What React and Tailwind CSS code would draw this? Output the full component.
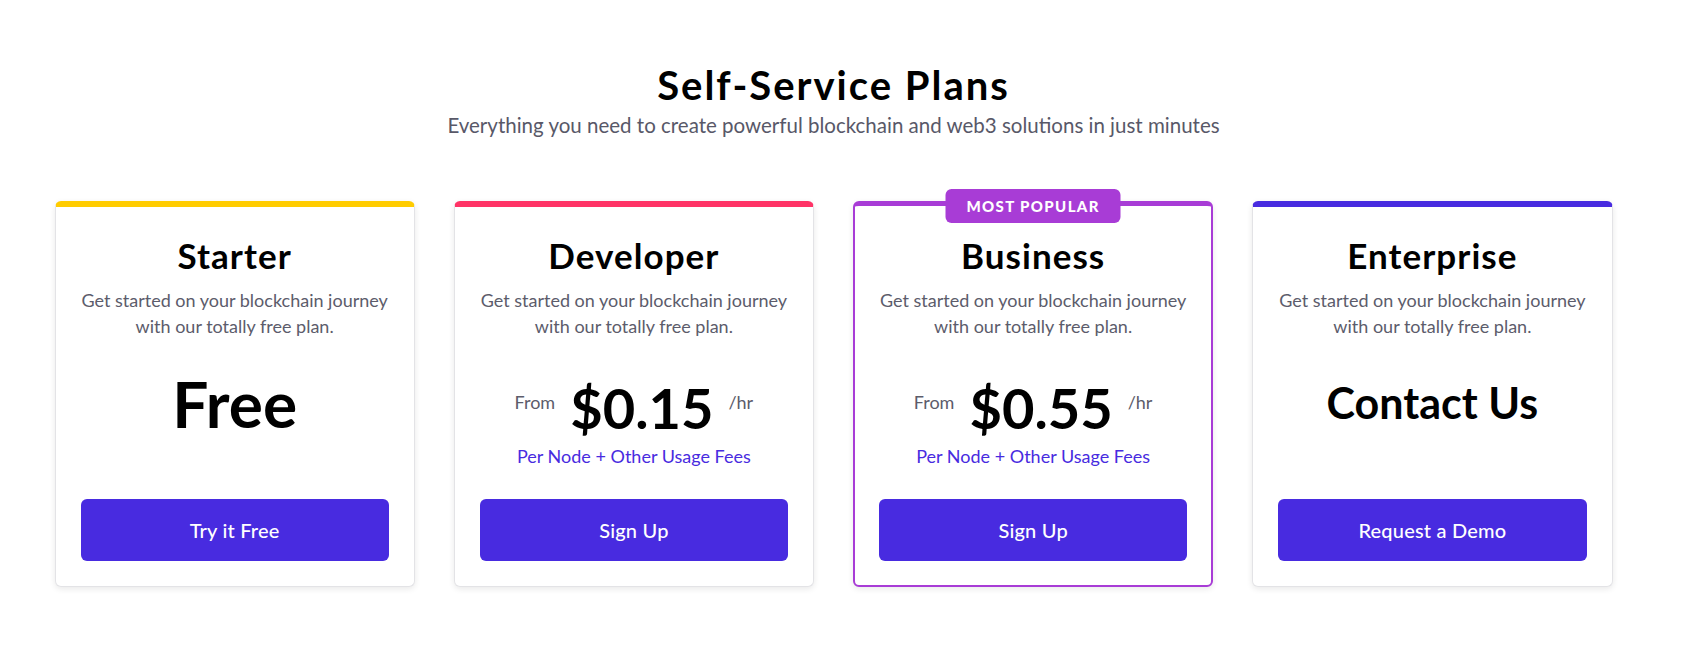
const plans = [
  {
    name: "Starter",
    bar: "border-t-[#ffcc00]",
    price: "Free",
    cta: "Try it Free",
  },
  {
    name: "Developer",
    bar: "border-t-[#ff3366]",
    price: "$0.15",
    from: true,
    cta: "Sign Up",
  },
  {
    name: "Business",
    popular: true,
    price: "$0.55",
    from: true,
    cta: "Sign Up",
  },
  {
    name: "Enterprise",
    bar: "border-t-[#482be0]",
    price: "Contact Us",
    contact: true,
    cta: "Request a Demo",
  },
];

const PlanCard = ({ plan }) => {
  // popular card gets a full purple frame instead of the coloured top bar
  const frame = plan.popular
    ? "border-2 border-t-[5px] border-[#a83cd6] px-[24px] pb-[24px]"
    : `border border-[#e3e3e6] border-t-[6px] px-[25px] pb-[25px] ${plan.bar}`;

  return (
    <div
      className={`relative flex h-[386px] flex-col rounded-md bg-white shadow-[0_2px_6px_rgba(0,0,0,0.09)] ${frame}`}
    >
      {plan.popular && (
        <div className="absolute left-1/2 top-[-17px] flex h-[34px] w-[175px] -translate-x-1/2 items-center justify-center rounded-md bg-[#a83cd6] text-[15px] font-black tracking-[0.09em] text-white">
          MOST POPULAR
        </div>
      )}

      <h2
        className={`text-center text-[35px] font-bold leading-[40px] tracking-[0.03em] text-black ${
          plan.popular ? "pt-[29px]" : "pt-[28px]"
        }`}
      >
        {plan.name}
      </h2>
      <p className="mt-[12px] whitespace-nowrap text-center text-[18px] leading-[26px] text-[#5c5c6b]">
        Get started on your blockchain journey
        <br />
        with our totally free plan.
      </p>

      {plan.from ? (
        <div className="mt-[39px] flex flex-col items-center">
          <div className="flex items-start justify-center">
            <span className="mt-[14px] text-[18px] leading-[20px] text-[#5c5c6b]">
              From
            </span>
            <span className="ml-[15px] text-[56px] font-bold leading-[60px] text-black">
              {plan.price}
            </span>
            <span className="ml-[15px] mt-[14px] text-[18px] leading-[20px] text-[#5c5c6b]">
              /hr
            </span>
          </div>
          <span className="mt-[8px] text-[18px] leading-[20px] text-[#482be0]">
            Per Node + Other Usage Fees
          </span>
        </div>
      ) : plan.contact ? (
        <div className="mt-[40px] text-center text-[43px] font-bold leading-[48px] text-black">
          {plan.price}
        </div>
      ) : (
        <div className="mt-[34px] text-center text-[64px] font-bold leading-[62px] text-black">
          {plan.price}
        </div>
      )}

      <button className="mt-auto h-[62px] w-full rounded-md bg-[#482be0] text-[20px] font-medium tracking-[0.01em] text-white">
        {plan.cta}
      </button>
    </div>
  );
};

const App = () => {
  return (
    <div
      className="min-h-[670px] w-full bg-white"
      style={{ fontFamily: "Lato, 'Noto Sans', sans-serif" }}
    >
      <div className="w-[1667px] pt-[61px]">
        <h1 className="text-center text-[40px] font-bold leading-[48px] tracking-[0.05em] text-black">
          Self-Service Plans
        </h1>
        <p className="mt-[3px] text-center text-[20.5px] leading-[26px] text-[#585868]">
          Everything you need to create powerful blockchain and web3 solutions
          in just minutes
        </p>

        <div className="mx-auto mt-[63px] grid w-[1558px] grid-cols-4 gap-[39px]">
          {plans.map((plan) => (
            <PlanCard key={plan.name} plan={plan} />
          ))}
        </div>
      </div>
    </div>
  );
};

export default App;
